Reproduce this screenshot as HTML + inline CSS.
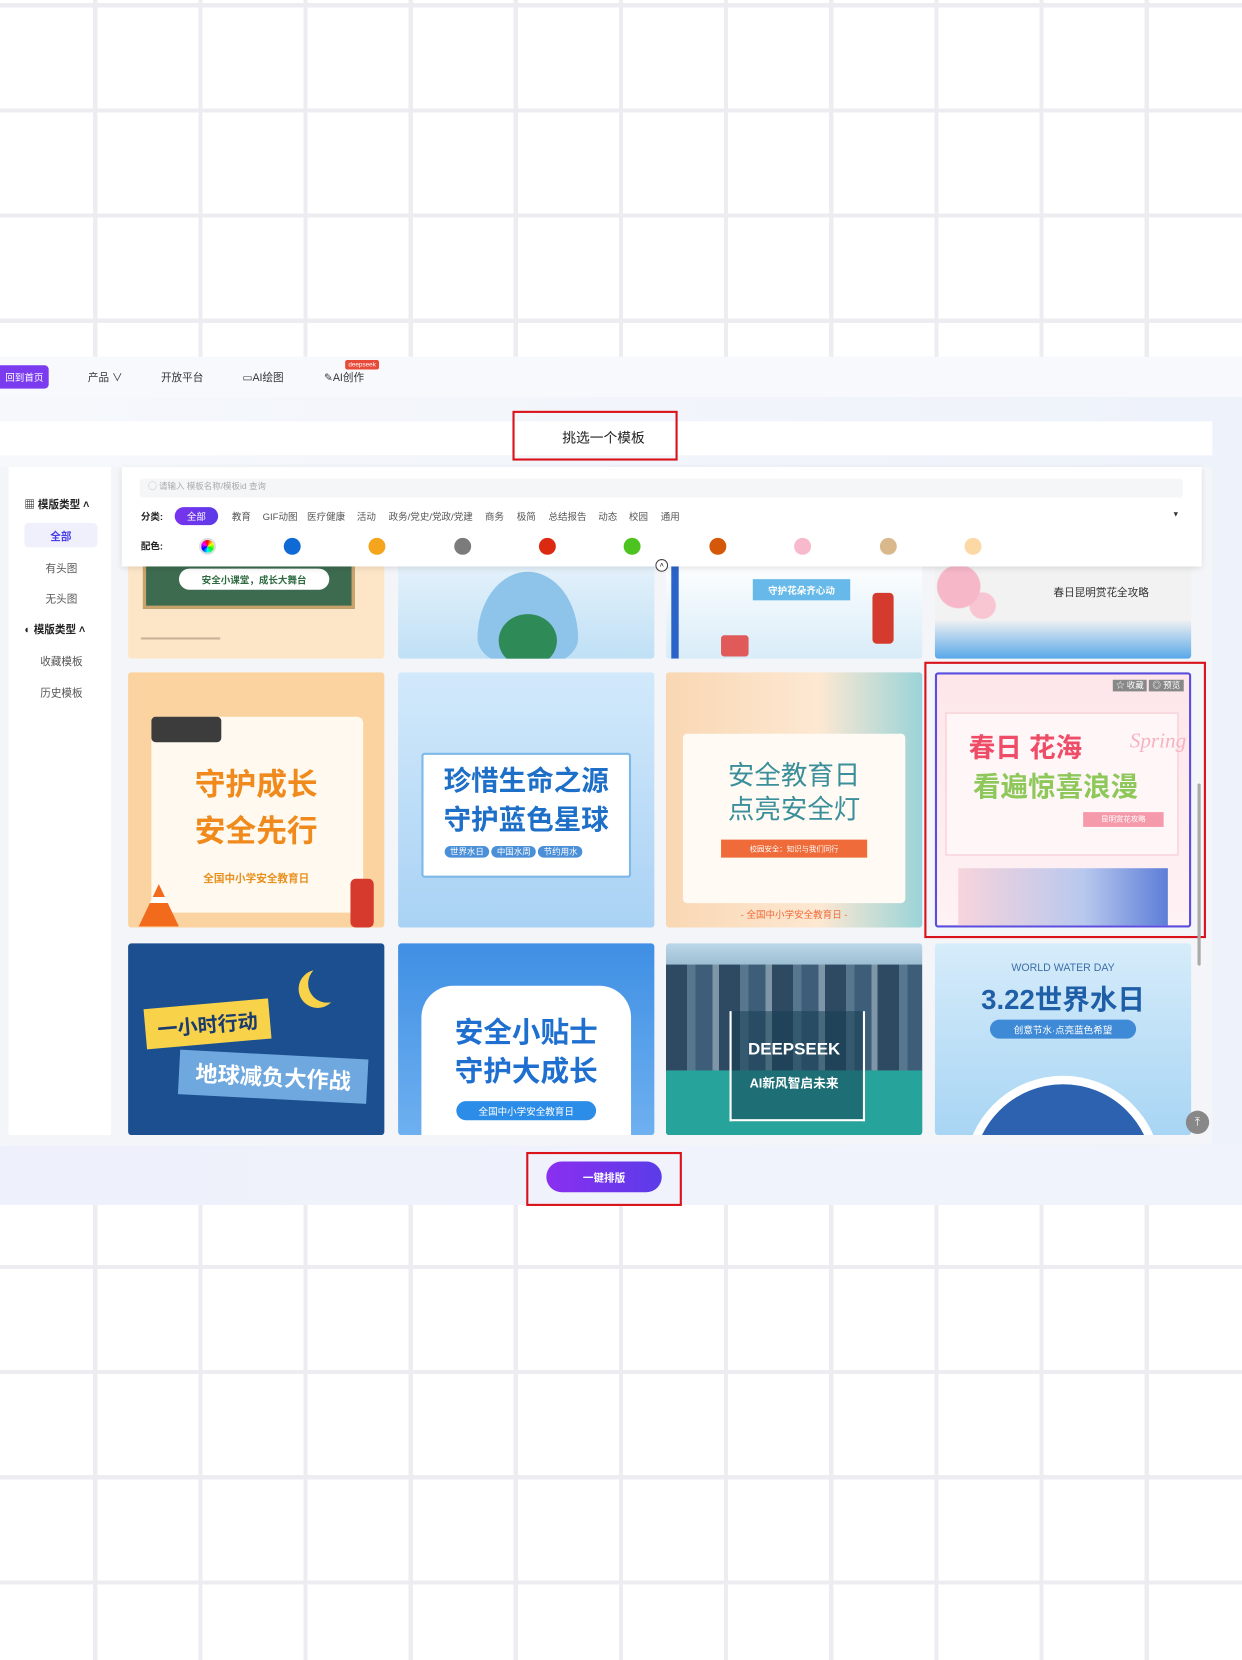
<!DOCTYPE html>
<html><head><meta charset="utf-8"><style>
*{margin:0;padding:0;box-sizing:border-box}
html,body{width:1242px;height:1660px;overflow:hidden;background:#fff}
#s{position:absolute;left:0;top:0;width:1173px;height:1568px;transform:scale(1.0588);transform-origin:0 0;font-family:"Liberation Sans","Noto Sans CJK SC",sans-serif;
background-color:#fff;
background-image:repeating-linear-gradient(90deg,transparent 0 88px,#ededf1 88px 92px,transparent 92px 99.3px),repeating-linear-gradient(180deg,transparent 0 3px,#ededf1 3px 7px,transparent 7px 99.3px);}
.a{position:absolute}
#app{left:0;top:337px;width:1173px;height:801px;background:linear-gradient(90deg,#f6f8fc,#eef2fa);}
.nav{font-size:10px;color:#333;top:11px}
.card{position:absolute;width:242px;overflow:hidden;border-radius:3px}
.c{display:flex;align-items:center;justify-content:center;text-align:center}
.dot{position:absolute;width:16px;height:16px;border-radius:50%;top:508px}
.cat{position:absolute;top:481px;font-size:9px;color:#555}
</style></head><body><div id="s">
<div id="app" class="a">
 <div class="a" style="left:0;top:0;width:1173px;height:38px;background:#f8f9fc"></div>
 <div class="a c" style="left:0;top:8px;width:46px;height:22px;background:#7b3cf0;border-radius:0 4px 4px 0;color:#fff;font-size:9px">回到首页</div>
 <div class="a nav" style="left:83px">产品 ∨</div>
 <div class="a nav" style="left:152px">开放平台</div>
 <div class="a nav" style="left:229px">▭AI绘图</div>
 <div class="a nav" style="left:306px">✎AI创作</div>
 <div class="a c" style="left:326px;top:3px;width:32px;height:9px;background:#e84a3a;color:#fff;font-size:6px;border-radius:2px">deepseek</div>
 <div class="a" style="left:0;top:61px;width:1145px;height:32px;background:#fff"></div>
 <div class="a c" style="left:0;top:59px;width:1140px;height:32px;font-size:13px;color:#222">挑选一个模板</div>
 <div class="a" style="left:0;top:104px;width:1145px;height:640px;background:#f4f5f8"></div>
 <div class="a" style="left:0;top:745px;width:1173px;height:56px;background:linear-gradient(90deg,#eef1fb,#f1f3fc)"></div>
</div>
<div class="a" style="left:484px;top:388px;width:156px;height:47px;border:2px solid #d9121b"></div>
<!-- sidebar -->
<div class="a" style="left:8px;top:441px;width:97px;height:631px;background:#fff"></div>
<div class="a" style="left:23px;top:468px;font-size:10px;font-weight:bold;color:#222">▦ 模版类型 ˄</div>
<div class="a c" style="left:23px;top:494px;width:69px;height:23px;background:#f0f0fd;border-radius:4px;color:#4a3ee8;font-size:10px;font-weight:bold">全部</div>
<div class="a" style="left:43px;top:528px;font-size:10px;color:#555">有头图</div>
<div class="a" style="left:43px;top:557px;font-size:10px;color:#555">无头图</div>
<div class="a" style="left:23px;top:586px;font-size:10px;font-weight:bold;color:#222">◐ 模版类型 ˄</div>
<div class="a" style="left:38px;top:616px;font-size:10px;color:#555">收藏模板</div>
<div class="a" style="left:38px;top:646px;font-size:10px;color:#555">历史模板</div>
<!-- cards row0 -->
<div class="card" style="left:121px;top:530px;height:92px;background:#fde6c8">
 <div class="a" style="left:14px;top:0;width:200px;height:45px;background:#3d6b4f;border:3px solid #c9a36a"></div>
 <div class="a c" style="left:48px;top:7px;width:142px;height:20px;background:#fff;border-radius:10px;color:#2f6a41;font-size:9px;font-weight:bold">安全小课堂，成长大舞台</div>
 <div class="a" style="left:12px;top:72px;width:75px;height:2px;background:#c9b39a"></div></div>
<div class="card" style="left:376px;top:530px;height:92px;background:linear-gradient(#e6f2fb,#bfe0f5)">
 <div class="a" style="left:75px;top:10px;width:95px;height:90px;background:#8ec3ea;border-radius:50% 50% 45% 45%/70% 70% 30% 30%"></div>
 <div class="a" style="left:95px;top:50px;width:55px;height:50px;background:#2e8b57;border-radius:50%"></div></div>
<div class="card" style="left:629px;top:530px;height:92px;background:linear-gradient(#fff,#d8ecf8)">
 <div class="a" style="left:5px;top:0;width:7px;height:92px;background:#2b64c8"></div>
 <div class="a c" style="left:82px;top:17px;width:92px;height:20px;background:#66b9e8;color:#fff;font-size:9px;font-weight:bold">守护花朵齐心动</div>
 <div class="a" style="left:195px;top:30px;width:20px;height:48px;background:#d43b2e;border-radius:4px"></div>
 <div class="a" style="left:52px;top:70px;width:26px;height:20px;background:#e05a5a;border-radius:3px"></div></div>
<div class="card" style="left:883px;top:530px;height:92px;background:linear-gradient(#f2f2f2 60%,#58a8e8)">
 <div class="a" style="left:0;top:0;width:75px;height:60px;background:radial-gradient(circle at 30% 40%,#f6b8c8 0 20px,transparent 21px),radial-gradient(circle at 60% 70%,#f8c6d2 0 12px,transparent 13px)"></div>
 <div class="a" style="left:112px;top:21px;font-size:10px;color:#333">春日昆明赏花全攻略</div></div>
<!-- filter card -->
<div class="a" style="left:115px;top:441px;width:1020px;height:94px;background:#fff;box-shadow:0 2px 6px rgba(0,0,0,.12)"></div>
<div class="a" style="left:132px;top:452px;width:985px;height:18px;background:#f5f6f8;border-radius:3px"></div>
<div class="a" style="left:140px;top:454px;font-size:8px;color:#aaa">◯ 请输入 模板名称/模板id 查询</div>
<div class="cat" style="left:133px;font-weight:bold;color:#222">分类:</div>
<div class="a c" style="left:165px;top:479px;width:41px;height:17px;background:linear-gradient(90deg,#7a33ee,#5b3be8);border-radius:9px;color:#fff;font-size:9px">全部</div>
<div class="cat" style="left:219px">教育</div><div class="cat" style="left:248px">GIF动图</div><div class="cat" style="left:290px">医疗健康</div><div class="cat" style="left:337px">活动</div><div class="cat" style="left:367px">政务/党史/党政/党建</div><div class="cat" style="left:458px">商务</div><div class="cat" style="left:488px">极简</div><div class="cat" style="left:518px">总结报告</div><div class="cat" style="left:565px">动态</div><div class="cat" style="left:594px">校园</div><div class="cat" style="left:624px">通用</div>
<div class="a" style="left:1107px;top:483px;font-size:7px;color:#333">▼</div>
<div class="cat" style="left:133px;top:509px;font-weight:bold;color:#222">配色:</div>
<div class="dot" style="left:188px;background:conic-gradient(red,yellow,lime,cyan,blue,magenta,red);border:2px solid #ddd"></div>
<div class="dot" style="left:268px;background:#0f6ad6"></div><div class="dot" style="left:348px;background:#f4a51c"></div><div class="dot" style="left:429px;background:#7b7b7b"></div><div class="dot" style="left:509px;background:#dc2a12"></div><div class="dot" style="left:589px;background:#4cc31f"></div><div class="dot" style="left:670px;background:#d55808"></div><div class="dot" style="left:750px;background:#f7b9cb"></div><div class="dot" style="left:831px;background:#d9b98b"></div><div class="dot" style="left:911px;background:#fcd8a5"></div>
<div class="a c" style="left:619px;top:528px;width:12px;height:12px;border:1px solid #444;border-radius:50%;font-size:7px;background:#fff">˄</div>
<!-- row1 -->
<div class="card" style="left:121px;top:635px;height:241px;background:#fbd3a0">
 <div class="a" style="left:22px;top:42px;width:200px;height:185px;background:#fff9ef;border-radius:6px"></div>
 <div class="a" style="left:22px;top:42px;width:66px;height:24px;background:#3c3c3c;border-radius:4px"></div>
 <div class="a c" style="left:0;top:85px;width:242px;font-size:29px;font-weight:bold;color:#f08a1c;line-height:44px">守护成长<br>安全先行</div>
 <div class="a c" style="left:0;top:186px;width:242px;font-size:10px;font-weight:bold;color:#e8901e">全国中小学安全教育日</div>
 <div class="a" style="left:10px;top:200px;width:38px;height:40px;background:linear-gradient(#f26b1d 0 30%,#fff 30% 45%,#f26b1d 45%);clip-path:polygon(50% 0,100% 100%,0 100%)"></div>
 <div class="a" style="left:210px;top:195px;width:22px;height:46px;background:#d63a2d;border-radius:5px"></div></div>
<div class="card" style="left:376px;top:635px;height:241px;background:linear-gradient(#d2e9fb,#a9d2f4)">
 <div class="a" style="left:22px;top:76px;width:198px;height:118px;background:#fff;border:2px solid #7cb9e8;border-radius:3px"></div>
 <div class="a c" style="left:0;top:84px;width:242px;font-size:26px;font-weight:bold;color:#1d6fc8;line-height:37px">珍惜生命之源<br>守护蓝色星球</div>
 <div class="a" style="left:44px;top:164px;font-size:8px;color:#fff"><span style="background:#4a8fd8;padding:1px 5px;border-radius:6px">世界水日</span> <span style="background:#4a8fd8;padding:1px 5px;border-radius:6px">中国水周</span> <span style="background:#4a8fd8;padding:1px 5px;border-radius:6px">节约用水</span></div></div>
<div class="card" style="left:629px;top:635px;height:241px;background:linear-gradient(90deg,#f9d7b3,#fde8d2 60%,#9ad4d9)">
 <div class="a" style="left:16px;top:58px;width:210px;height:160px;background:#fffaf4;border-radius:4px"></div>
 <div class="a c" style="left:0;top:82px;width:242px;font-size:25px;color:#3a8f9a;line-height:32px">安全教育日<br>点亮安全灯</div>
 <div class="a c" style="left:52px;top:158px;width:138px;height:17px;background:#ef6b3a;color:#fff;font-size:7px">校园安全：知识与我们同行</div>
 <div class="a c" style="left:0;top:222px;width:242px;font-size:9px;color:#ef6b3a">- 全国中小学安全教育日 -</div></div>
<div class="card" style="left:883px;top:635px;height:241px;background:linear-gradient(#fde6ea,#fff2f4);border:2px solid #5b4de0">
 <div class="a" style="left:8px;top:36px;width:220px;height:135px;background:#fff6f7;border:1px solid #f5c7d0"></div>
 <div class="a" style="left:30px;top:50px;font-size:25px;font-weight:bold;color:#ef4c67">春日 花海</div>
 <div class="a" style="left:182px;top:52px;font-size:20px;font-style:italic;color:#f6b2c0;font-family:'Liberation Serif',serif">Spring</div>
 <div class="a" style="left:34px;top:86px;font-size:26px;font-weight:bold;color:#8ec85a">看遍惊喜浪漫</div>
 <div class="a c" style="left:138px;top:130px;width:76px;height:14px;background:#f59aab;color:#fff;font-size:7px">昆明赏花攻略</div>
 <div class="a" style="left:20px;top:183px;width:198px;height:56px;background:linear-gradient(90deg,#f7d4dc,#b8c8ee 60%,#5d7ed8)"></div>
 <div class="a" style="left:166px;top:5px;font-size:8px;color:#fff"><span style="background:#888;padding:1px 3px">☆ 收藏</span> <span style="background:#888;padding:1px 3px">◎ 预览</span></div></div>
<div class="a" style="left:873px;top:625px;width:266px;height:261px;border:2px solid #d9121b"></div>
<!-- row2 -->
<div class="card" style="left:121px;top:891px;height:181px;background:#1b4f90">
 <div class="a c" style="left:16px;top:57px;width:118px;height:38px;background:#f8d34a;color:#1b3a6e;font-size:19px;font-weight:bold;transform:rotate(-5deg)">一小时行动</div>
 <div class="a c" style="left:48px;top:105px;width:178px;height:42px;background:#6fa8de;color:#fff;font-size:21px;font-weight:bold;transform:rotate(3deg)">地球减负大作战</div>
 <div class="a" style="left:170px;top:20px;width:36px;height:36px;border-radius:50%;box-shadow:-9px 5px 0 #f8d34a"></div></div>
<div class="card" style="left:376px;top:891px;height:181px;background:linear-gradient(#3f8fe4,#6eb0f0)">
 <div class="a" style="left:22px;top:40px;width:198px;height:150px;background:#fff;border-radius:30px 30px 0 0"></div>
 <div class="a c" style="left:0;top:66px;width:242px;font-size:27px;font-weight:bold;color:#1e6fd0;line-height:37px">安全小贴士<br>守护大成长</div>
 <div class="a c" style="left:55px;top:149px;width:132px;height:18px;background:#2c8de8;color:#fff;font-size:9px;border-radius:9px">全国中小学安全教育日</div></div>
<div class="card" style="left:629px;top:891px;height:181px;background:linear-gradient(#bcd7ea,#4a7c94 40%,#1e8a8a)">
 <div class="a" style="left:0;top:20px;width:242px;height:100px;background:repeating-linear-gradient(90deg,#2e4a63 0 20px,#57778f 20px 28px,#3d5d78 28px 44px,#7e96a8 44px 50px)"></div>
 <div class="a" style="left:0;top:120px;width:242px;height:61px;background:#26a39a"></div>
 <div class="a" style="left:60px;top:64px;width:128px;height:104px;border:2px solid #fff;border-top:none;background:rgba(20,60,80,.5)"></div>
 <div class="a c" style="left:0;top:92px;width:242px;font-size:16px;font-weight:bold;color:#fff">DEEPSEEK</div>
 <div class="a c" style="left:0;top:123px;width:242px;font-size:12px;font-weight:bold;color:#fff">AI新风智启未来</div></div>
<div class="card" style="left:883px;top:891px;height:181px;background:linear-gradient(#d6ecfa,#a8d5f4)">
 <div class="a c" style="left:0;top:18px;width:242px;font-size:10px;color:#3d6fa8">WORLD WATER DAY</div>
 <div class="a c" style="left:0;top:33px;width:242px;font-size:26px;font-weight:bold;color:#1f5fa8">3.22世界水日</div>
 <div class="a c" style="left:52px;top:72px;width:138px;height:18px;background:#3f8ad6;color:#fff;font-size:9px;border-radius:9px">创意节水·点亮蓝色希望</div>
 <div class="a" style="left:28px;top:125px;width:186px;height:186px;border-radius:50%;background:#2c62b0;border:8px solid #fff"></div></div>
<div class="a" style="left:1131px;top:740px;width:3px;height:172px;background:#aaa;border-radius:2px"></div>
<div class="a c" style="left:1120px;top:1049px;width:22px;height:22px;border-radius:50%;background:#888;color:#fff;font-size:11px">⤒</div>
<!-- bottom -->
<div class="a c" style="left:516px;top:1097px;width:109px;height:29px;border-radius:15px;background:linear-gradient(90deg,#8b2ff0,#5a3ce8);color:#fff;font-size:10px;font-weight:bold">一键排版</div>
<div class="a" style="left:497px;top:1088px;width:147px;height:51px;border:2px solid #d9121b"></div>
</div></body></html>
